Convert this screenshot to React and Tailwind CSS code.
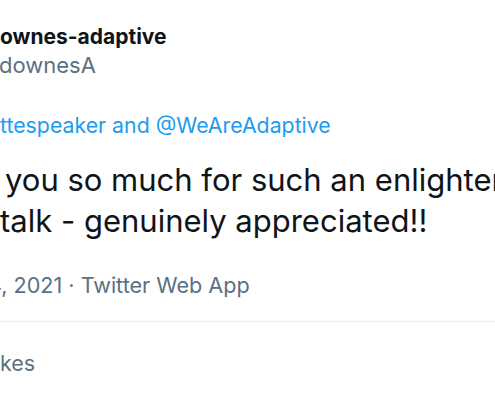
export default function App() {
  return (
    <div className="w-[495px] h-[400px] overflow-hidden bg-white font-['Inter',sans-serif] whitespace-nowrap">
      {/* Author */}
      <div className="pt-[23px]">
        <p className="text-[21px] leading-[28px] font-bold text-[#0f1419]">ownes-adaptive</p>
        <p className="text-[22px] leading-[28px] text-[#5b7083] -ml-[1px]">downesA</p>
      </div>

      {/* Replying to */}
      <p className="mt-[32px] text-[21.3px] leading-[28px] text-[#1d9bf0]">ttespeaker and @WeAreAdaptive</p>

      {/* Tweet body */}
      <div className="mt-[20px] text-[31px] leading-[41px] text-[#0f1419]">
        <p className="pl-[5px]">you so much for such an enlightening</p>
        <p>talk - genuinely appreciated!!</p>
      </div>

      {/* Timestamp */}
      <p className="mt-[30px] text-[21.6px] leading-[28px] text-[#5b7083] -ml-[12px]">4, 2021 · Twitter Web App</p>

      <div className="mt-[22px] border-t border-[#ebeef0]" />

      {/* Likes */}
      <p className="mt-[27px] text-[21.5px] leading-[28px] text-[#5b7083]">kes</p>
    </div>
  )
}
